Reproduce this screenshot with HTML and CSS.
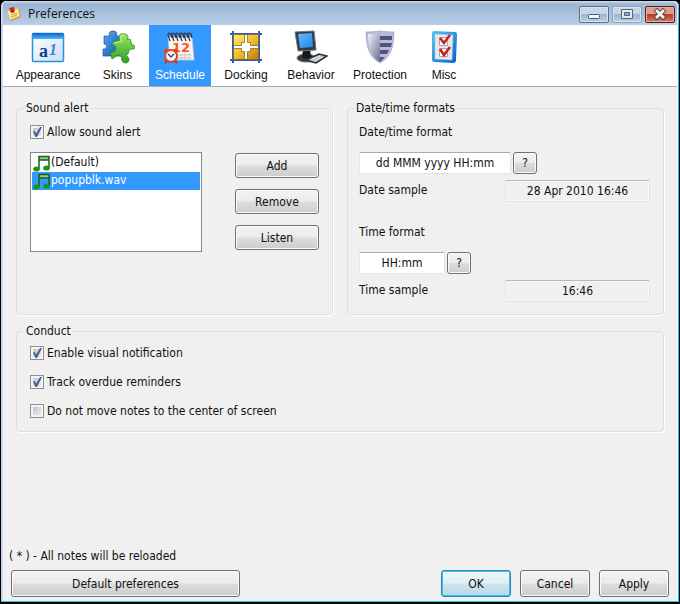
FILE: index.html
```html
<!DOCTYPE html>
<html lang="en">

<head>
    <meta charset="UTF-8">
    <title>Preferences</title>
    <meta name="viewport" content="width=device-width, initial-scale=1">
    <link rel="stylesheet" href="styles.css">
</head>

<body>

    <div class="window">

        <header class="titlebar">
            <svg class="app-icon" viewBox="0 0 16 16" aria-hidden="true">
                <path d="M2 6 13 3 15 11 5 15Z" fill="#c49a38" />
                <path d="M1 5 12 2 14 10 4 14Z" fill="#ffeb96" stroke="#d9a840" stroke-width=".6" />
                <path d="M5 9l6-2M5 11l6-2" stroke="#b98b2c" stroke-width=".8" />
                <path d="M3 2 8 1 9 5 5 7Z" fill="#dc241c" />
                <path d="M5 5 8 6" stroke="#8d100d" stroke-width="1.6" />
            </svg>
            <h1>Preferences</h1>
            <div class="window-buttons">
                <button type="button" class="win-btn" aria-label="Minimize">
                    <svg viewBox="0 0 14 12"><rect x="1.5" y="6.5" width="11" height="4" rx="1" fill="#f4f4f4" stroke="#50586a" /></svg>
                </button>
                <button type="button" class="win-btn dim" aria-label="Maximize">
                    <svg viewBox="0 0 14 12"><path d="M1.5 1.5h11v9h-11Z" fill="#e8e8e8" stroke="#596273" /><path d="M4.5 4.5h5v3h-5Z" fill="#8fabc9" stroke="#596273" /></svg>
                </button>
                <button type="button" class="win-btn close" aria-label="Close">
                    <svg viewBox="0 0 14 12"><path d="M4 3 10 9M10 3 4 9" stroke="#52404a" stroke-width="4.6" stroke-linecap="square" /><path d="M4 3 10 9M10 3 4 9" stroke="#f6f6f6" stroke-width="2.8" stroke-linecap="square" /></svg>
                </button>
            </div>
        </header>

        <!-- Section tabs -->

        <nav class="tabs">
            <button type="button" class="tab">
                <svg viewBox="0 0 34 34" aria-hidden="true">
                    <defs>
                        <linearGradient id="page" x2="1" y2="1"><stop offset="0" stop-color="#fff" /><stop offset="1" stop-color="#cfdff5" /></linearGradient>
                        <linearGradient id="pageBar" x2="0" y2="1"><stop offset="0" stop-color="#0b64c8" /><stop offset="1" stop-color="#48b8f8" /></linearGradient>
                    </defs>
                    <rect x="1.5" y="3.5" width="31" height="28" rx="1" fill="url(#page)" stroke="#1795ea" stroke-width="1.5" />
                    <rect x="1.5" y="3" width="31" height="6" fill="url(#pageBar)" />
                    <text x="8" y="27" class="glyph-a">a</text>
                    <text x="18" y="25" class="glyph-one">1</text>
                </svg>
                Appearance
            </button>
            <button type="button" class="tab">
                <svg viewBox="0 0 34 34" aria-hidden="true">
                    <defs>
                        <linearGradient id="pieceBlue" x2="1" y2="1"><stop offset="0" stop-color="#5bb0f2" /><stop offset="1" stop-color="#0d4ca8" /></linearGradient>
                        <linearGradient id="pieceGreen" x2="0" y2="1"><stop offset="0" stop-color="#9be862" /><stop offset="1" stop-color="#2da022" /></linearGradient>
                    </defs>
                    <path d="M3 6H9C7 3 9 1 12 1s5 2 3 5h7v20H15c1-4-6-4-5 0H2v-7c4 1 5-5 1-5Z" fill="url(#pieceBlue)" stroke="#1553a1" stroke-width=".7" />
                    <path d="m12 12 7-2c-3-4 0-7 4-6 4 0 5 3 3 6l3-1 2 6c4-1 4 5 0 4-3 0-3 2-4 5l-2 1c4 3 4 7 0 8-4 0-5-3-4-6l-4-2-6 4-2-7c5 1 7-3 5-6-1-2-3-1-4 0Z" fill="url(#pieceGreen)" stroke="#248a22" stroke-width=".8" />
                    <path d="m13 13 8-2c-3-3-1-6 2-6" fill="none" stroke="#c4f79c" />
                </svg>
                Skins
            </button>
            <button type="button" class="tab selected" aria-current="page">
                <svg viewBox="0 0 34 34" aria-hidden="true">
                    <path d="M5 7h24l2 23H7Z" fill="#f9f5f3" stroke="#d9cac8" stroke-width=".7" />
                    <path d="M12 25h17M14 28h15M18 23v7M22 23v7M26 23v7" stroke="#cfc5c4" />
                    <path d="M7 11 5 5q0-3 3-1l1 4M11 11 9 5q0-3 3-1l1 4M15 11 13 5q0-3 3-1l1 4M19 11 17 5q0-3 3-1l1 4M23 11 21 5q0-3 3-1l1 4M27 11 25 5q0-3 3-1l1 4" fill="none" stroke="#39373f" stroke-width="1.3" />
                    <text x="9" y="22" class="glyph-date">12</text>
                    <path d="m2 33 3-4M14 33l-3-4" stroke="#c52e1d" stroke-width="2" />
                    <circle cx="3.5" cy="21" r="2.5" fill="#e1462b" />
                    <circle cx="12.5" cy="21" r="2.5" fill="#e1462b" />
                    <circle cx="8" cy="26" r="6" fill="#e9f6fc" stroke="#df4226" stroke-width="2" />
                    <path d="m5 24 3 3 3-3" fill="none" stroke="#323e49" stroke-width="1.2" />
                </svg>
                Schedule
            </button>
            <button type="button" class="tab">
                <svg viewBox="0 0 34 34" aria-hidden="true">
                    <defs>
                        <linearGradient id="gold" x2="1" y2="1"><stop offset="0" stop-color="#ffec76" /><stop offset=".5" stop-color="#f0c02a" /><stop offset="1" stop-color="#ba7b08" /></linearGradient>
                    </defs>
                    <path d="M1 4h32M1 30h32M4 1v32M30 1v32" stroke="#2d5bb5" stroke-width="2" />
                    <path d="M4.5 4.5h11v8h-3v3h-8ZM18.500 4.500h11v11h-8v-3h-3ZM4.500 18.500h8v3h3v8h-11ZM21.500 18.500h8v11h-11v-8h3Z" fill="url(#gold)" stroke="#8c6a18" stroke-width=".8" />
                </svg>
                Docking
            </button>
            <button type="button" class="tab">
                <svg viewBox="0 0 34 34" aria-hidden="true">
                    <defs>
                        <linearGradient id="screen" x2="1" y2="1"><stop offset="0" stop-color="#62bcff" /><stop offset="1" stop-color="#2282e8" /></linearGradient>
                    </defs>
                    <ellipse cx="12" cy="28" rx="9" ry="4" fill="#343940" stroke="#6e747b" />
                    <path d="m9 20 7-1 1 8-5 2-4-2Z" fill="#15191e" />
                    <path d="m1 2 19-1 2 19-18 1Z" fill="#343940" stroke="#70777e" />
                    <path d="m4 4 14-1 1 14-13 1Z" fill="url(#screen)" />
                    <path d="m14 29 11-5 8 2-11 7-7-2Z" fill="#b9bdc3" stroke="#292e34" stroke-width="1.5" />
                    <path d="m18 29 9-3M20 31l9-4" stroke="#fff" stroke-dasharray="1.5 1" />
                </svg>
                Behavior
            </button>
            <button type="button" class="tab">
                <svg viewBox="0 0 34 34" aria-hidden="true">
                    <defs>
                        <linearGradient id="shieldLeft" x2="1" y2="1"><stop offset="0" stop-color="#f4f4fc" /><stop offset="1" stop-color="#696996" /></linearGradient>
                    </defs>
                    <path d="M3 2Q10 2 17 1q7 1 14 1c0 16-4 26-14 31C7 28 3 18 3 2Z" fill="#b9bad8" stroke="#a2a2bd" stroke-width=".6" />
                    <path d="M5 4q7 0 12-1v29C8 27 5 17 5 4Z" fill="url(#shieldLeft)" />
                    <path d="M17 6h12v4H17ZM17 13h12l-1 4H17ZM17 20h9l-2 4h-7ZM17 27h5l-5 5Z" fill="#52547e" />
                </svg>
                Protection
            </button>
            <button type="button" class="tab">
                <svg viewBox="0 0 34 34" aria-hidden="true">
                    <defs>
                        <linearGradient id="board" x2="1" y2="1"><stop offset="0" stop-color="#54c7f4" /><stop offset="1" stop-color="#0660ce" /></linearGradient>
                    </defs>
                    <path d="m7 1 21 1q2 0 2 3l-1 25q0 3-3 3L7 32q-2 0-2-3V3q0-2 2-2Z" fill="url(#board)" />
                    <path d="m8 4 18 1-1 25-17-1Z" fill="#e7e7ea" stroke="#bcc4cd" stroke-width=".5" />
                    <path d="M12.5 7.5h8v8h-8ZM12.5 18.5h8v8h-8Z" fill="#fff" stroke="#a3a5ad" />
                    <path d="m13 8 4 5 6-8M13 19l4 6 6-8" fill="none" stroke="#ce1b16" stroke-width="2.5" />
                </svg>
                Misc
            </button>
        </nav>

        <!-- Schedule page -->

        <main class="page">

            <div class="columns">
                <fieldset class="group">
                    <legend>Sound alert</legend>
                    <label class="check"><input type="checkbox" checked>Allow sound alert</label>
                    <div class="sounds">
                        <select class="sound-list" size="5" aria-label="Sound">
                            <option>(Default)</option>
                            <option selected>popupblk.wav</option>
                        </select>
                        <div class="sound-actions">
                            <button type="button" class="btn">Add</button>
                            <button type="button" class="btn">Remove</button>
                            <button type="button" class="btn">Listen</button>
                        </div>
                    </div>
                </fieldset>

                <fieldset class="group formats">
                    <legend>Date/time formats</legend>
                    <div class="format">
                        <label for="dateFormat">Date/time format</label>
                        <div class="format-input">
                            <input type="text" id="dateFormat" class="date-input" value="dd MMM yyyy HH:mm">
                            <button type="button" class="btn help">?</button>
                        </div>
                        <div class="sample">
                            <label for="dateSample">Date sample</label>
                            <output id="dateSample">28 Apr 2010 16:46</output>
                        </div>
                    </div>
                    <div class="format">
                        <label for="timeFormat">Time format</label>
                        <div class="format-input">
                            <input type="text" id="timeFormat" class="time-input" value="HH:mm">
                            <button type="button" class="btn help">?</button>
                        </div>
                        <div class="sample">
                            <label for="timeSample">Time sample</label>
                            <output id="timeSample">16:46</output>
                        </div>
                    </div>
                </fieldset>
            </div>

            <fieldset class="group conduct">
                <legend>Conduct</legend>
                <label class="check"><input type="checkbox" checked>Enable visual notification</label>
                <label class="check"><input type="checkbox" checked>Track overdue reminders</label>
                <label class="check"><input type="checkbox">Do not move notes to the center of screen</label>
            </fieldset>

        </main>

        <footer class="footer">
            <p>( * ) - All notes will be reloaded</p>
            <div class="footer-buttons">
                <button type="button" class="btn defaults">Default preferences</button>
                <button type="button" class="btn primary">OK</button>
                <button type="button" class="btn">Cancel</button>
                <button type="button" class="btn">Apply</button>
            </div>
        </footer>

    </div>

</body>

</html>
```

FILE: styles.css
```css
:root {
    --bg: #f0f0f0;
    --text: #101010;
    --select: #3399ff;
    --group: #d8e0e8;
    --btn-border: #707070;
}

* {
    box-sizing: border-box;
}

body {
    margin: 0;
    background: #000;
    color: var(--text);
    font-family: "DejaVu Sans Condensed", Tahoma, sans-serif;
    font-size: 12px;
    line-height: 14px;
}

button,
input,
select {
    margin: 0;
    font: inherit;
    color: inherit;
}

.window {
    display: flex;
    flex-direction: column;
    min-height: 100vh;
    background: var(--bg);
    border: 1px solid #000;
    border-bottom-width: 2px;
    border-radius: 6px 6px 0 0;
    box-shadow: inset -1px -1px #2cc4ee, inset 2px 0 #c9d8ee;
    padding: 0 2px 1px;
}

/* Title bar */

.titlebar {
    display: flex;
    align-items: center;
    gap: 6px;
    height: 24px;
    padding: 2px 2px 0 3px;
    background: linear-gradient(#d3e1f0, #9bb5d3 12%, #b7cfe8);
    border-radius: 5px 5px 0 0;
}

.app-icon {
    width: 16px;
    height: 16px;
}

h1 {
    flex: 1;
    margin: 0;
    font: 12px/16px "Open Sans", "Segoe UI", sans-serif;
}

.window-buttons {
    display: flex;
    gap: 3px;
}

.win-btn {
    display: grid;
    place-items: center;
    width: 30px;
    height: 17px;
    padding: 0;
    background: linear-gradient(#c4d6e8 45%, #9bb6d2 50%, #b8d0e8);
    border: 1px solid #596f8b;
    border-radius: 2px;
    box-shadow: inset 0 0 0 1px #d7e5f3;
}

.win-btn.dim {
    border-color: #8aa3bf;
}

.win-btn.close {
    background: linear-gradient(#e19a8b 45%, #b93b25 50%, #d87a60);
    border-color: #5c1c22;
    box-shadow: inset 0 0 0 1px #e5aaa0;
}

.win-btn svg {
    width: 14px;
    height: 12px;
}

/* Tabs */

.tabs {
    display: grid;
    grid-template-columns: 76px 63px 62px 70px 60px 78px 50px;
    height: 62px;
    padding-left: 7px;
    background: #fff;
    border-bottom: 1px solid #a8a8a8;
}

.tab {
    display: flex;
    flex-direction: column;
    align-items: center;
    gap: 3px;
    padding: 5px 0 0;
    background: none;
    border: 0;
    font: 12px/16px "Liberation Sans", Arial, sans-serif;
}

.tab.selected {
    background: var(--select);
    color: #fff;
}

.tab svg {
    width: 34px;
    height: 34px;
}

.glyph-a {
    font: bold 18px "Liberation Serif", serif;
    fill: #173d91;
}

.glyph-one {
    font: italic bold 16px "Liberation Serif", serif;
    fill: #2f8ad5;
}

.glyph-date {
    font: bold 13px "DejaVu Sans", sans-serif;
    fill: #f25a22;
}

/* Groups */

.page {
    display: flex;
    flex-direction: column;
    gap: 9px;
    padding: 14px 13px;
}

.columns {
    display: grid;
    grid-template-columns: 1fr 1fr;
    gap: 14px;
}

.group {
    min-width: 0;
    margin: 0;
    padding: 9px 13px 12px;
    border: 1px solid var(--group);
    border-radius: 4px;
    box-shadow: 1px 1px #fff;
}

.formats {
    padding-left: 11px;
}

legend {
    margin-left: -6px;
    padding: 0 2px;
}

.formats legend {
    margin-left: -5px;
}

.check {
    display: flex;
    align-items: center;
    gap: 3px;
    height: 16px;
}

.check input {
    display: grid;
    place-items: center;
    width: 14px;
    height: 14px;
    appearance: none;
    background: linear-gradient(135deg, #b8bdc6, #f4f4f4);
    border: 1px solid #8e8f8f;
    box-shadow: inset 0 0 0 2px #f4f4f4;
}

.check input:checked::after {
    content: "";
    width: 10px;
    height: 10px;
    background: #4a5f97;
    clip-path: polygon(10% 45%, 28% 40%, 42% 65%, 80% 0, 100% 0, 50% 100%, 35% 100%);
}

.sounds {
    display: flex;
    justify-content: space-between;
    margin-top: 12px;
}

.sound-list {
    width: 172px;
    height: 100px;
    padding: 1px;
    overflow: hidden;
    background: #fff;
    border: 1px solid #828790;
    border-radius: 0;
    outline: 0;
}

.sound-list option {
    --note: url("data:image/svg+xml,%3Csvg xmlns='http://www.w3.org/2000/svg' viewBox='0 0 17 17'%3E%3Cpath d='M6 2h10v3H6z' fill='%2393c993'/%3E%3Cpath d='M6 14V1.5h10V13M6 5h10' fill='none' stroke='%23185f1a' stroke-width='1.5'/%3E%3Cellipse cx='3.5' cy='14' rx='3.3' ry='2.6' fill='%2316961b'/%3E%3Cellipse cx='13.5' cy='13' rx='3.3' ry='2.6' fill='%2316961b'/%3E%3C/svg%3E") 1px 1px / 17px 17px no-repeat;
    height: 18px;
    min-height: 18px;
    padding: 1px 0 1px 19px;
    line-height: 16px;
    background: var(--note);
}

.sound-list option:checked {
    background: var(--note), linear-gradient(var(--select), var(--select));
    -webkit-text-fill-color: #fff;
}

.sound-actions {
    display: flex;
    flex-direction: column;
    gap: 11px;
    padding-top: 1px;
}

.btn {
    width: 84px;
    height: 25px;
    padding: 0;
    background: linear-gradient(#f3f3f3, #ebebeb 48%, #dcdcdc 52%, #cdcdcd);
    border: 1px solid var(--btn-border);
    border-radius: 3px;
    box-shadow: inset 0 0 0 1px #fafafa;
}

/* Date and time formats */

.format + .format {
    margin-top: 22px;
}

.format > label {
    display: block;
    height: 16px;
    line-height: 16px;
}

.format-input {
    display: flex;
    gap: 2px;
    margin-top: 12px;
}

.format-input input {
    height: 22px;
    padding: 0;
    text-align: center;
    background: #fff;
    border: 1px solid #e2e6ea;
    border-top-color: #abadb3;
    border-radius: 2px;
}

.date-input {
    width: 152px;
}

.time-input {
    width: 86px;
}

.btn.help {
    width: 24px;
    height: 22px;
}

.sample {
    display: flex;
    justify-content: space-between;
    margin-top: 6px;
    line-height: 20px;
}

.sample output {
    width: 145px;
    height: 22px;
    text-align: center;
    border: 1px solid #dfe3e8;
    border-top-color: #b4b6bb;
    border-radius: 2px;
    box-shadow: inset 0 0 0 1px #f8f8f8;
}

.conduct {
    display: flex;
    flex-direction: column;
    gap: 13px;
    padding-top: 7px;
}

/* Footer */

.footer {
    margin-top: auto;
    padding: 0 8px 4px;
}

.footer p {
    margin: 0 0 7px -2px;
}

.footer-buttons {
    display: flex;
    gap: 9px;
}

.footer-buttons .btn {
    width: 70px;
    height: 27px;
}

.footer-buttons .defaults {
    width: 229px;
    margin-right: auto;
}

.btn.primary {
    background: linear-gradient(#edf5f9, #e2eff6 48%, #cee4ef 52%, #b8d8e8);
    border-color: #3c7fb1;
    box-shadow: inset 0 0 0 1px #35c4ef;
}
```
